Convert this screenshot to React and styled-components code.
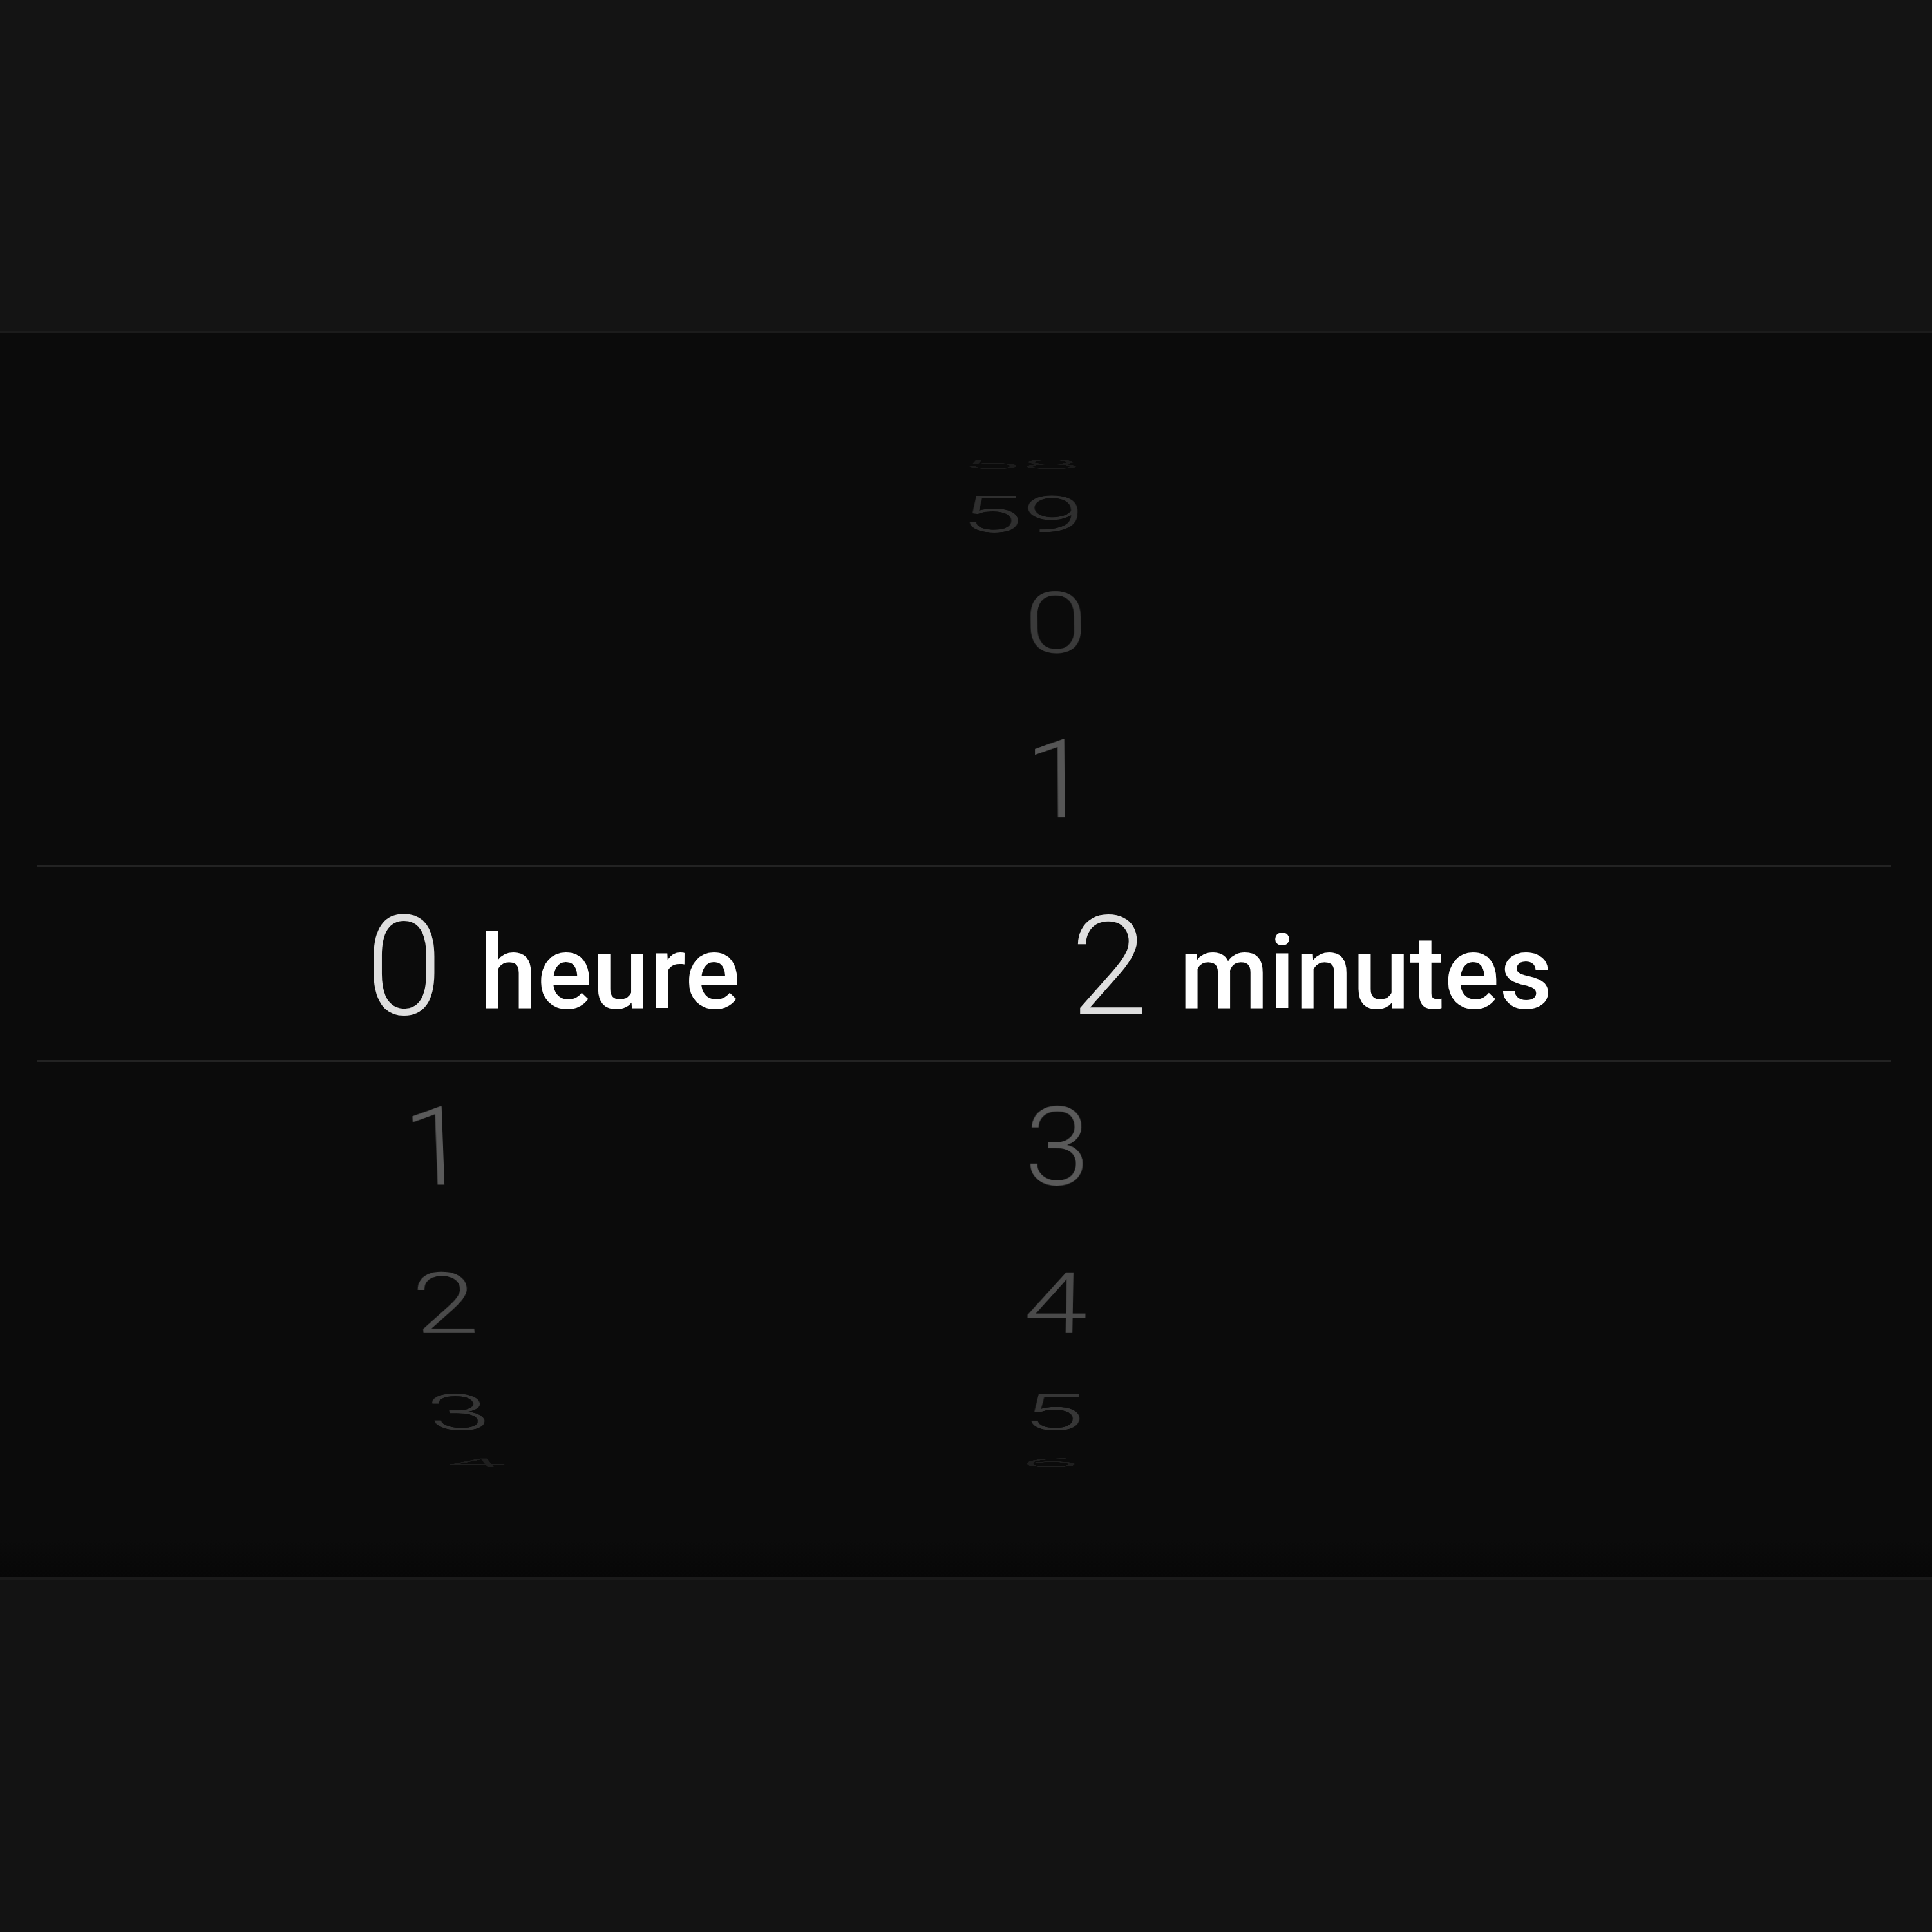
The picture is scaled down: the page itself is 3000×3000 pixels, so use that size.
import React from "react";
import styled, { createGlobalStyle } from "styled-components";

const GlobalStyle = createGlobalStyle`
  html, body {
    margin: 0;
    padding: 0;
    background: #131313;
  }
  body {
    font-family: Roboto, "Liberation Sans", sans-serif;
  }
`;

// wheel geometry (px / deg), fitted on the screenshot
const RADIUS = 860;
const STEP = 19.5;

const ABOVE = ["#565656", "#3a3a3a", "#2f2f2f", "#1c1c1c"];
const BELOW = ["#5a5a5a", "#4a4a4a", "#363636", "#1f1f1f"];

const hours = { above: [], below: ["1", "2", "3", "4"] };
const minutes = { above: ["1", "0", "59", "58"], below: ["3", "4", "5", "6"] };

const Screen = styled.div`
  width: 3000px;
  height: 3000px;
  display: flex;
  flex-direction: column;
  overflow: hidden;
`;

const TopBar = styled.div`
  height: 514px;
  background: #141414;
  border-bottom: 3px solid #1c1c1c;
`;

const Panel = styled.div`
  height: 1932px;
  display: grid;
  grid-template-rows: 826px 306px 1fr;
  background: linear-gradient(
    to bottom,
    #0b0b0b 0%,
    #0b0b0b 97%,
    #070707 100%
  );
  overflow: hidden;
`;

const WheelLayer = styled.div`
  grid-row: 1 / -1;
  grid-column: 1;
  padding-top: 26px;
  display: grid;
  grid-template-columns: 723px 971px 1fr;
  align-items: center;
  perspective: 8000px;
  perspective-origin: 50% calc(50% + 13px);
`;

const Wheel = styled.div`
  display: grid;
  justify-items: end;
  align-items: center;
  transform-style: preserve-3d;
`;

const Item = styled.div`
  grid-area: 1 / 1;
  font-size: 183px;
  line-height: 1;
  font-weight: 300;
  font-variant-numeric: tabular-nums;
  color: ${(p) => p.$color};
  backface-visibility: hidden;
  white-space: nowrap;
`;

const Band = styled.div`
  grid-row: 2;
  grid-column: 1;
  margin: 0 63px 0 57px;
  padding: 11px 0 0 430px;
  border-top: 3px solid #232323;
  border-bottom: 3px solid #232323;
  display: flex;
  align-items: center;
  box-sizing: border-box;
`;

const Group = styled.div`
  display: flex;
  align-items: center;
  width: ${(p) => (p.$width ? `${p.$width}px` : "auto")};
`;

const Value = styled.div`
  width: 200px;
  text-align: right;
  font-size: 215px;
  line-height: 1;
  font-weight: 300;
  color: #dedede;
`;

const Label = styled.div`
  margin-left: ${(p) => p.$gap}px;
  margin-top: 18px;
  font-size: 160px;
  line-height: 1;
  font-weight: 500;
  color: #ffffff;
`;

const BottomBar = styled.div`
  flex: 1;
  background: #131313;
  border-top: 5px solid #1a1a1a;
`;

function WheelColumn({ data }) {
  const rows = [
    ...data.above.map((v, i) => ({ v, k: i + 1, color: ABOVE[i] })),
    ...data.below.map((v, i) => ({ v, k: -(i + 1), color: BELOW[i] })),
  ];
  return (
    <Wheel>
      {rows.map((r) => (
        <Item
          key={r.k}
          $color={r.color}
          style={{
            transform: `translateZ(-${RADIUS}px) rotateX(${r.k * STEP}deg) translateZ(${RADIUS}px)`,
          }}
        >
          {r.v}
        </Item>
      ))}
    </Wheel>
  );
}

export default function App() {
  return (
    <>
      <GlobalStyle />
      <Screen>
        <TopBar />
        <Panel>
          <WheelLayer>
            <WheelColumn data={hours} />
            <WheelColumn data={minutes} />
          </WheelLayer>
          <Band>
            <Group $width={1095}>
              <Value>0</Value>
              <Label $gap={58}>heure</Label>
            </Group>
            <Group>
              <Value>2</Value>
              <Label $gap={49}>minutes</Label>
            </Group>
          </Band>
        </Panel>
        <BottomBar />
      </Screen>
    </>
  );
}
